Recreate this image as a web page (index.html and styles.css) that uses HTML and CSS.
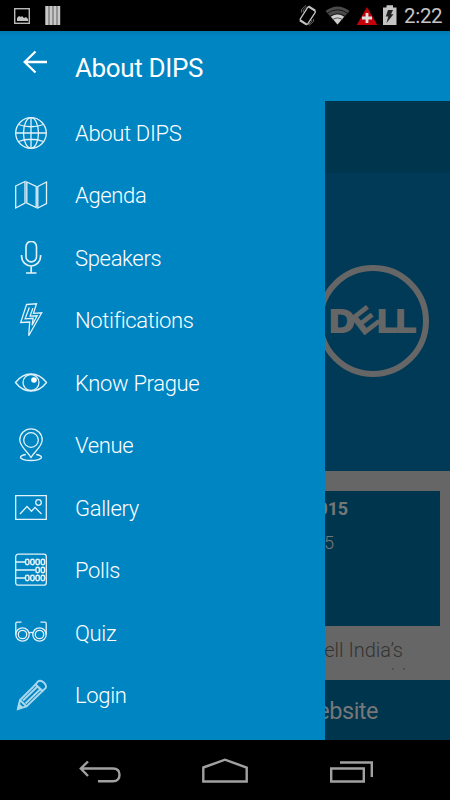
FILE: index.html
```html
<!DOCTYPE html>
<html lang="en">
<head>
  <meta charset="UTF-8">
  <meta name="viewport" content="width=device-width, initial-scale=1.0">
  <title>About DIPS</title>
  <link rel="stylesheet" href="styles.css">
</head>
<body>
  <div class="phone">
    <div class="status">
      <svg class="notices" width="70" height="31" viewBox="0 0 70 31">
        <rect x="14.7" y="8.7" width="14.6" height="14.6" fill="none" stroke="#b9b9b9" stroke-width="1.4"/>
        <path d="M17 21v-3l2-2 2 1 1-1 2 2 2-1 2 2v2z" fill="#c4c4c4"/>
        <path d="M45 6h15v19H45z" fill="#858585"/>
        <path d="M47 6v19M51 6v19M55 6v19M59 6v19" stroke="#c8c8c8" stroke-width="2.4"/>
      </svg>
      <svg class="signals" width="106" height="31" viewBox="294 0 106 31">
        <g fill="none" stroke="#c2c2c2">
          <rect x="303.3" y="7.7" width="9" height="15.500" rx="1" stroke-width="1.300" transform="rotate(33 307.6 15.5)"/>
          <path d="M299.800 20.500l7 4.300M308.500 6.200l6.800 4.400" stroke-width="1.900"/>
          <path d="M301.500 12.500v-3l4.500-4.200M303.400 12v-2l3.500-3.500M313.600 19v2.400l-4.500 4M311.700 20v1.400l-3.500 3.400" stroke-width=".7" stroke="#909090"/>
        </g>
        <path d="M325.500 11q12-9 24 0L337.500 24.500z" fill="#4b4b4b"/>
        <path d="M327 13.500q10.500-7.500 21 0M329.500 16.500q8-5.500 16 0" fill="none" stroke="#151515" stroke-width="1"/>
        <path d="M331 16.700q6.500-4.500 13 0L337.500 24.500z" fill="#d0d0d0"/>
        <path d="M332.500 19.700q5-3.500 10 0" fill="none" stroke="#555" stroke-width="1"/>
        <path d="M367 7l10.300 18h-20.600z" fill="#c4000b"/>
        <path d="M367 13v10M362 18h10" stroke="#ddd" stroke-width="2.800"/>
        <path d="M383 7.500h3.500V5.300h6.500v2.200h3.500V25H383z" fill="#c4c4c4"/>
        <path d="M388 10h5l-2 4.300h2.500L386.500 23l1.800-6.500h-2.500z" fill="#222"/>
      </svg>
      <span class="clock">2:22</span>
    </div>
    <div class="header">
      <svg class="back" width="24" height="24" viewBox="0 0 24 24">
        <path d="M12.500 1.500L1.700 12l10.800 10.500M1.700 12H24" fill="none" stroke="#fff" stroke-width="2.300"/>
      </svg>
      <h1>About DIPS</h1>
    </div>
    <div class="main">
      <ul class="menu">
        <li>
          <svg viewBox="0 0 34 34"><circle cx="17" cy="17" r="15.300"/><ellipse cx="17" cy="17" rx="7.500" ry="15.300"/><path d="M17 1.500v31M1.500 17h31M4.500 8.500Q17 13 29.500 8.500M4.500 25.500Q17 21 29.500 25.500"/></svg>
          <span>About DIPS</span>
        </li>
        <li>
          <svg viewBox="0 0 34 34"><path d="M1.700 8l9.300-4.500v21.500L1.700 30zM12.800 4l9.400 4.500v21L12.800 25zM23.800 8.500l8.700-4.500v21.500l-8.700 4.500z"/></svg>
          <span>Agenda</span>
        </li>
        <li>
          <svg viewBox="0 0 34 34"><rect x="12" y=".4" width="10.500" height="20.500" rx="5.250" stroke-width="1.600"/><path d="M7.600 14v1.500a9.500 9.500 0 0 0 19 0v-1.500M17.200 25v6.500M12 32h10.500" stroke-width="1.700"/></svg>
          <span>Speakers</span>
        </li>
        <li>
          <svg viewBox="0 0 34 34"><path d="M12.500 1.500l10-.7-3 9.500 8.200-.5-13 23 1-13.800-9 .5zM15.300 4.500l-4.200 11.300 8-.5-1 7 5-9.500-7 .3 2.800-8"/></svg>
          <span>Notifications</span>
        </li>
        <li>
          <svg viewBox="0 0 34 34"><path d="M1.500 16.500Q8 8 17 8T32.500 16.500Q26 25 17 25T1.500 16.500z"/><circle cx="17" cy="16.500" r="8"/><circle cx="20" cy="14" r="2.800" fill="#fff" stroke="none"/></svg>
          <span>Know Prague</span>
        </li>
        <li>
          <svg viewBox="0 0 34 34"><path d="M17 29.500C13.500 23.500 5.800 18.500 5.800 12a11.200 11.200 0 0 1 22.400 0c0 6.500-7.700 11.500-11.200 17.500z"/><circle cx="17" cy="12" r="7.300"/><path d="M11.800 26.500c-3.200.6-5.300 1.500-5.300 2.700 0 1.800 4.700 3.300 10.500 3.300s10.500-1.500 10.500-3.300c0-1.200-2.100-2.100-5.300-2.700"/></svg>
          <span>Venue</span>
        </li>
        <li>
          <svg viewBox="0 0 34 34"><path d="M1.700 4.700h30.600v23.600H1.700zM6 23l7-7.500 4.500 4.800 3.500-3.800 6.500 6.500"/><circle cx="24.500" cy="11.500" r="2.800"/></svg>
          <span>Gallery</span>
        </li>
        <li>
          <svg viewBox="0 0 34 34"><rect x="1.700" y="1.200" width="30.600" height="31" rx="2.500"/><path d="M2 9h9M2 17h19M2 25h9"/><g stroke-width="1.500"><rect x="11.500" y="6.200" width="3.500" height="5.600" rx="1.700"/><rect x="16.700" y="6.200" width="3.500" height="5.600" rx="1.700"/><rect x="21.900" y="6.200" width="3.500" height="5.600" rx="1.700"/><rect x="27.100" y="6.200" width="3.500" height="5.600" rx="1.700"/><rect x="21.900" y="14.200" width="3.500" height="5.600" rx="1.700"/><rect x="27.100" y="14.200" width="3.500" height="5.600" rx="1.700"/><rect x="11.500" y="22.200" width="3.500" height="5.600" rx="1.700"/><rect x="16.700" y="22.200" width="3.500" height="5.600" rx="1.700"/><rect x="21.900" y="22.200" width="3.500" height="5.600" rx="1.700"/><rect x="27.100" y="22.200" width="3.500" height="5.600" rx="1.700"/></g></svg>
          <span>Polls</span>
        </li>
        <li>
          <svg viewBox="0 0 34 34"><circle cx="8.500" cy="18.500" r="6.700"/><circle cx="8.500" cy="18.500" r="4.200"/><circle cx="25.500" cy="18.500" r="6.700"/><circle cx="25.500" cy="18.500" r="4.200"/><path d="M14.800 16.800q2.200-1 4.400 0M1.800 18.500V7.500q0-1.300 1.300-1.300H7.500M32.200 18.500V7.500q0-1.300-1.300-1.300H26.500"/></svg>
          <span>Quiz</span>
        </li>
        <li>
          <svg class="pencil" viewBox="0 0 34 34"><path d="M4 31l2-9L21.500 6.500l7 6.500L12.500 28.500zM6 22l6.500 6.500M9 22.500L23.500 8.500M11.500 25.500L26.500 11"/><path d="M21.500 6.500l2.500-3q2.500-2 5.800 1t1.700 5.700L28.500 13z"/><path d="M4 31l1-4.500 3 3z" fill="#bfe1f0"/></svg>
          <span>Login</span>
        </li>
      </ul>
      <div class="page">
        <div class="tabs"></div>
        <div class="banner">
          <svg class="logo" width="114" height="114" viewBox="0 0 114 114">
            <circle cx="57" cy="57" r="53" fill="none" stroke="#666" stroke-width="6"/>
            <g class="letters">
              <text x="13.500" y="68" textLength="25" lengthAdjust="spacingAndGlyphs">D</text>
              <text class="tilted" x="38" y="67.500" transform="rotate(-38 49 57)" textLength="23" lengthAdjust="spacingAndGlyphs">E</text>
              <text x="61.500" y="68" textLength="20" lengthAdjust="spacingAndGlyphs">L</text>
              <text x="80" y="68" textLength="20" lengthAdjust="spacingAndGlyphs">L</text>
            </g>
          </svg>
        </div>
        <div class="info">
          <div class="card">
            <b>015</b>
            <span>5</span>
          </div>
          <p>ell India’s</p>
          <svg class="cut" width="16" height="2" viewBox="0 0 16 2"><path d="M1 1h2M12 1h2" stroke="#3c3c3c"/></svg>
        </div>
        <div class="website">ebsite</div>
      </div>
    </div>
    <div class="nav">
      <svg width="450" height="60" viewBox="0 0 450 60" fill="none" stroke="#a1a1a1" stroke-width="2.400">
        <path d="M88 21.500l-7.200 7 7.200 7.500M81 28.500h32q6.500 0 6.500 6.300t-6.500 6.500H98"/>
        <path d="M203.300 27.500l21.700-7.800 21.700 7.800v14h-43.400z"/>
        <path d="M331.200 28.500h32.600v13h-32.600zM340 22.500h31.800V37"/>
      </svg>
    </div>
  </div>
</body>
</html>
```
FILE: styles.css
```css
html,body,ul,h1,p{
  margin: 0;
  padding: 0;
}
body{
  font-family: Roboto, "Noto Sans", sans-serif;
  background-color: #000;
}
svg{
  display: block;
  flex: none;
}
.phone{
  width: 450px;
  height: 800px;
  display: flex;
  flex-direction: column;
  overflow: hidden;
}
.status{
  height: 31px;
  display: flex;
  background-color: #000;
}
.signals{
  margin-left: 224px;
}
.clock{
  margin-left: 4px;
  line-height: 32px;
  font-size: 20.5px;
  letter-spacing: -0.3px;
  color: #c4c4c4;
}
.header{
  height: 70px;
  display: flex;
  box-sizing: border-box;
  padding-left: 23px;
  background: linear-gradient(#0079b2, #0085c3 5px);
}
.back{
  margin-top: 19px;
}
.header h1{
  margin-left: 28px;
  line-height: 74px;
  font-size: 26px;
  font-weight: 400;
  letter-spacing: -0.35px;
  color: #fff;
}
.main{
  height: 639px;
  display: flex;
}
.menu{
  width: 325px;
  flex: none;
  list-style-type: none;
  background-color: #0085c3;
}
.menu li{
  height: 62.5px;
  display: flex;
  align-items: center;
  padding-left: 14px;
  color: #fff;
  font-size: 22px;
  font-weight: 300;
  letter-spacing: -0.33px;
}
.menu svg{
  width: 34px;
  height: 34px;
  margin-right: 27px;
  padding-top: 1px;
  fill: none;
  stroke: #e3f2f9;
  stroke-width: 1.3;
}
.menu .pencil{
  stroke: #a9d7eb;
  stroke-width: 1.9;
}
.menu span{
  padding-top: 2px;
}
.page{
  width: 125px;
  display: flex;
  flex-direction: column;
  overflow: hidden;
  background-color: #666;
}
.tabs{
  height: 72px;
  background-color: #00354e;
}
.banner{
  height: 298px;
  display: flex;
  justify-content: flex-end;
  background-color: #003a56;
}
.logo{
  margin: 91px 20px 0 0;
}
.letters{
  font-family: "Liberation Sans", sans-serif;
  font-size: 32px;
  font-weight: 700;
  fill: #666;
  stroke: #666;
  stroke-width: 2;
}
.tilted{
  font-size: 32px;
  stroke-width: 1;
}
.info{
  height: 209px;
  display: flex;
  flex-direction: column;
  align-items: flex-end;
  box-sizing: border-box;
  padding: 20px 10px 0 0;
}
.card{
  width: 115px;
  height: 135px;
  display: flex;
  flex-direction: column;
  align-items: flex-end;
  box-sizing: border-box;
  background-color: #00354e;
  color: #777;
}
.card b{
  margin-right: 92px;
  line-height: 36px;
  font-size: 18px;
  letter-spacing: -0.2px;
}
.card span{
  margin-right: 106px;
  line-height: 32px;
  font-size: 18px;
  font-weight: 300;
}
.info p{
  margin-right: 37px;
  padding-top: 7px;
  line-height: 35px;
  font-size: 20px;
  font-weight: 300;
  white-space: nowrap;
  color: #333;
}
.cut{
  margin-right: 33px;
}
.website{
  height: 60px;
  padding-right: 72px;
  display: flex;
  justify-content: flex-end;
  line-height: 62px;
  font-size: 23.5px;
  letter-spacing: -0.5px;
  background-color: #00354e;
  color: #777;
}
.nav{
  height: 60px;
  background-color: #000;
}
```
